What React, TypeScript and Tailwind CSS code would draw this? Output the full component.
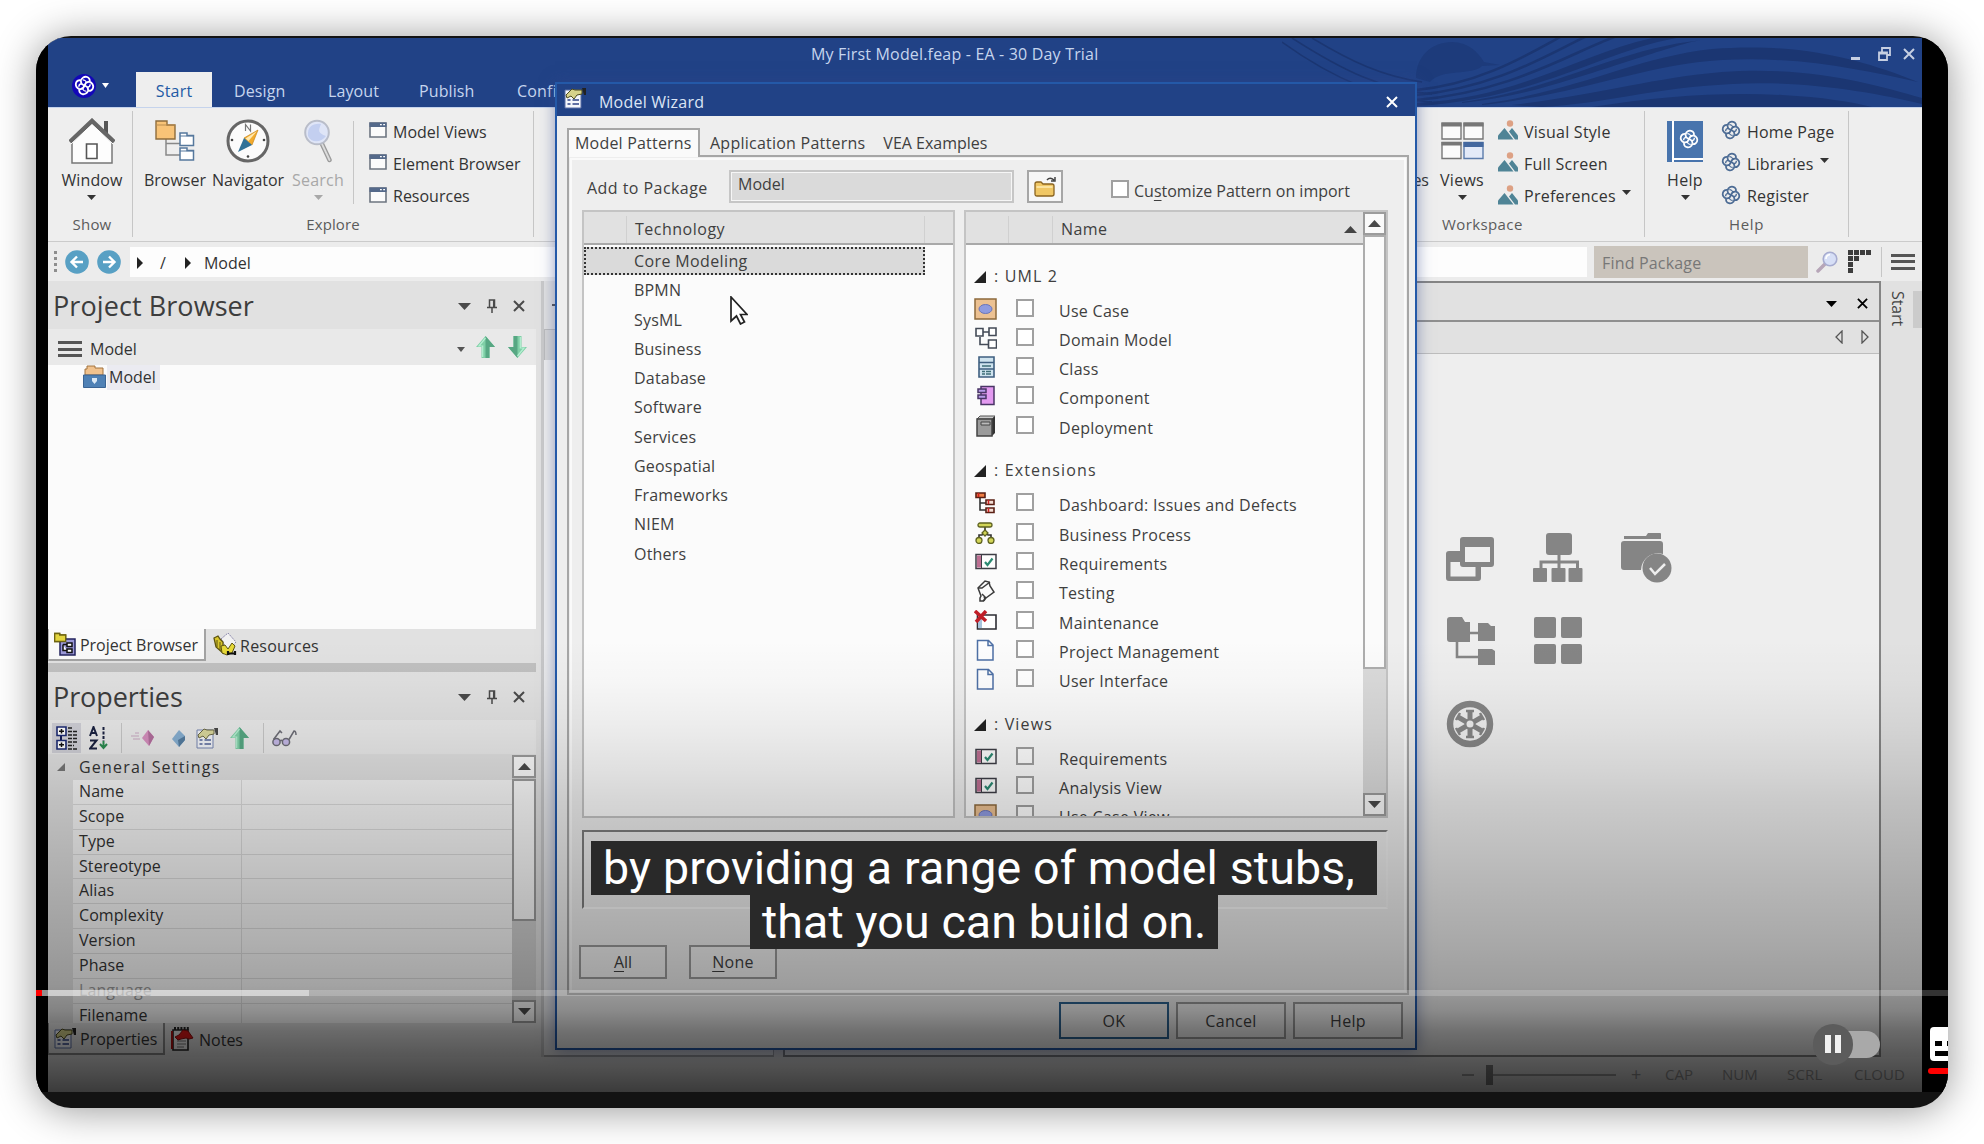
import React from "react";

type IconProps = { className?: string };

/* ---------- small glyphs ---------- */

const Caret = ({ className = "" }: IconProps) => (
  <svg viewBox="0 0 10 6" preserveAspectRatio="none" className={`block h-[5px] w-[9px] shrink-0 ${className}`}>
    <path d="M0 0h10L5 6z" fill="currentColor" />
  </svg>
);

const Cross = ({ className = "" }: IconProps) => (
  <svg viewBox="0 0 12 12" className={`block size-3 shrink-0 ${className}`}>
    <path d="M1 1l10 10M11 1L1 11" stroke="currentColor" strokeWidth="2" fill="none" />
  </svg>
);

const Pin = () => (
  <svg viewBox="0 0 10 14" className="block h-[14px] w-[10px] shrink-0 text-[#4a4a4a]">
    <path d="M2.500 8V1h5v7M6.700 1v7M0 8.600h10M5 9v5" stroke="currentColor" strokeWidth="1.500" fill="none" />
  </svg>
);

const Knot = ({ className = "" }: IconProps) => (
  <svg viewBox="0 0 24 24" className={`block shrink-0 ${className}`} fill="none" stroke="currentColor" strokeWidth="2.100">
    <path d="M8 6.500C8.500 3 12 1.500 14.500 2.200C17.500 3 18.500 5.500 17.800 8" />
    <path d="M17.500 8C21 8.500 22.500 12 21.800 14.500C21 17.500 18.500 18.500 16 17.800" />
    <path d="M16 17.500C15.500 21 12 22.500 9.500 21.800C6.500 21 5.500 18.500 6.200 16" />
    <path d="M6.500 16C3 15.500 1.500 12 2.200 9.500C3 6.500 5.500 5.500 8 6.200" />
    <path d="M8 6.300C7.500 9 9 11 12 12C15 13 16.500 15 16 17.700" />
    <path d="M17.700 8C15 7.500 13 9 12 12C11 15 9 16.500 6.300 16" />
    <path d="M10 5.500C12 5.500 14 7 14 9M18.500 10.500C18.500 12.500 17 14 15 14M14 18.500C12 18.500 10 17 10 15M5.500 13.500C5.500 11.500 7 10 9 10" strokeWidth="1.500" />
  </svg>
);

const Arrow = ({ down = false }: { down?: boolean }) => (
  <svg viewBox="0 0 19 22" className={`block h-[22px] w-[19px] shrink-0 ${down ? "rotate-180" : ""}`}>
    <path d="M9.500 0L19 11h-5.500v11h-8V11H0z" fill="#7fcfa6" />
    <path d="M9.500 0L19 11h-5.500v11h-4z" fill="#57a783" />
    <path d="M9.500 2L3 10h3.700v11" stroke="#b5efd2" strokeWidth="1.200" fill="none" />
  </svg>
);

const Burger = ({ className = "" }: IconProps) => (
  <div className={`flex h-4 w-6 shrink-0 flex-col justify-between ${className}`}>
    <div className="h-[3px] bg-[#555]" />
    <div className="h-[3px] bg-[#555]" />
    <div className="h-[3px] bg-[#555]" />
  </div>
);

const HandSheet = ({ className = "" }: IconProps) => (
  <svg viewBox="0 0 23 22" className={`block h-[22px] w-[23px] shrink-0 ${className}`}>
    <path d="M1 3h16v18H1z" fill="#f4f6fb" stroke="#5b6ea5" />
    <path d="M3.500 13h3M8.500 13H15M3.500 17h3M8.500 17H15" stroke="#2e4386" strokeWidth="1.600" />
    <path d="M2 8l6-6 3 1h7v4l-5 1-3 4-3-3-4 2z" fill="#d6d28a" stroke="#4d4a1e" />
    <path d="M18 1h4v7h-2z" fill="#222" />
  </svg>
);

const Magnifier = ({ className = "", flip = false }: IconProps & { flip?: boolean }) => (
  <svg viewBox="0 0 28 44" className={`block shrink-0 ${flip ? "-scale-x-100" : ""} ${className}`}>
    <path d="M18 25l7.500 16" stroke="#9b9b9b" strokeWidth="4.500" strokeLinecap="round" />
    <path d="M18 25l7.500 16" stroke="#dcdcdc" strokeWidth="1.800" strokeLinecap="round" />
    <circle cx="13" cy="13.500" r="11.800" fill="#dfe5f7" stroke="#b9bdc9" strokeWidth="2" />
    <path d="M4 17C3 7 10 4 17 5C14 12 14 14 22 17C17 24 7 24 4 17z" fill="#c3cff0" />
  </svg>
);

const SearchGlass = () => (
  <svg viewBox="0 0 22 22" className="ml-[8px] block size-[22px] shrink-0">
    <path d="M9.500 12.500L2 20" stroke="#b7a6b8" strokeWidth="3.500" strokeLinecap="round" />
    <circle cx="14" cy="8" r="6.800" fill="#d7dff6" stroke="#a7acd0" strokeWidth="1.600" />
    <path d="M10 8q0-4 4-4.500" stroke="#fff" strokeWidth="1.600" fill="none" />
  </svg>
);

/* ---------- ribbon ---------- */

const WindowIcon = () => (
  <svg viewBox="0 0 18 16" className="block h-4 w-[18px] shrink-0">
    <path d="M1 1h16v14H1z" fill="#fbfbfb" stroke="#6d7580" strokeWidth="1.600" />
    <path d="M.5.500h17v4.500H.5z" fill="#54698a" />
    <path d="M11 2.600h1.800M14.200 2.600H16" stroke="#fff" strokeWidth="1.200" />
  </svg>
);

const PictureIcon = () => (
  <svg viewBox="0 0 20 20" className="block size-5 shrink-0">
    <circle cx="12" cy="3.500" r="3.200" fill="#dda184" />
    <path d="M0 19.500v-4L6.500 8l9 11.500z" fill="#4f8496" />
    <path d="M11 11.500l3-3.500 6 7.500v4h-3z" fill="#4f8496" />
  </svg>
);

const RibbonItem = ({ icon, label, caret }: { icon: React.ReactNode; label: string; caret?: boolean }) => (
  <div className="flex h-[32.250px] items-center gap-[6px]">
    {icon}
    <span className="mt-[3px]">{label}</span>
    {caret && <Caret className="mb-1 text-[#333]" />}
  </div>
);

const BigButton = ({ icon, label, caret, className = "" }: { icon: React.ReactNode; label: string; caret?: boolean; className?: string }) => (
  <div className={`flex flex-col items-center ${className}`}>
    <div className="flex h-[60px] items-center">{icon}</div>
    <span className="-mt-px leading-5">{label}</span>
    {caret && <Caret className="mt-[5px]" />}
  </div>
);

const HouseIcon = () => (
  <svg viewBox="0 0 46 46" className="block size-[46px]">
    <path d="M37 3v14" stroke="#555" strokeWidth="4" />
    <path d="M3 45V23L23 5l20 18v22z" fill="#fdfdfd" stroke="#777" strokeWidth="1.500" />
    <path d="M1 24L23 3l22 21" fill="none" stroke="#666" strokeWidth="4.500" />
    <path d="M2 26L23 6.500 44 26" fill="none" stroke="#fff" strokeWidth="1" />
    <path d="M17.500 26h10.500v14.500H17.500z" fill="#fff" stroke="#555" strokeWidth="1.600" />
  </svg>
);

const BrowserIcon = () => (
  <svg viewBox="0 0 40 42" className="block h-[42px] w-10">
    <path d="M11 19v16h14M11 23.500h14" stroke="#888" strokeWidth="1.500" fill="none" />
    <path d="M1 19V1h11v4h8v14z" fill="#f8c377" stroke="#8d6c3c" strokeWidth="1.400" />
    <path d="M1 5h19" stroke="#b98d50" />
    <path d="M25 25.500V13h7v2.500h6.500v10zM25 40V28h7v2.500h6.500V40z" fill="#fff" stroke="#56789d" strokeWidth="1.500" />
    <path d="M25 16h13M25 31h13" stroke="#56789d" />
  </svg>
);

const CompassIcon = () => (
  <svg viewBox="0 0 44 44" className="block size-11">
    <circle cx="22" cy="22" r="20" fill="#fbfbfb" stroke="#666" strokeWidth="3" />
    <path d="M19.500 12V5.500l5 6.500V5.500" stroke="#777" strokeWidth="1.200" fill="none" />
    <circle cx="6" cy="21" r="1.300" fill="#444" /><circle cx="38" cy="21" r="1.300" fill="#444" /><circle cx="22" cy="37.500" r="1.300" fill="#444" />
    <path d="M32 11L18 19l8 7z" fill="#f3ab2d" stroke="#c9861b" strokeWidth=".7" />
    <path d="M31 12L19.500 19.500l3 2.500z" fill="#ffe9b0" />
    <path d="M12 33l6-14 8 7z" fill="#2f7197" />
  </svg>
);

const ViewsIcon = () => (
  <svg viewBox="0 0 43 38" className="block h-[38px] w-[43px]">
    <g fill="#fbfbfb" stroke="#777" strokeWidth="1.400">
      <path d="M1 1h19v16H1zM23 1h19v16H23zM1 20.500h19v16H1z" />
      <path d="M23 20.500h19v16H23z" fill="#e3eaf8" stroke="#5c7cab" />
    </g>
    <path d="M.5 1h20v3.500H.5zM22.500 1h20v3.500h-20zM.5 20h20v3.500H.5z" fill="#777" />
    <path d="M22.500 20h20v5h-20z" fill="#44689f" />
  </svg>
);

const BookIcon = () => (
  <div className="flex h-[41px] w-9 bg-[#4874ad]">
    <div className="w-[7px] border-r-2 border-white" />
    <div className="flex flex-1 flex-col items-center justify-between pt-2">
      <Knot className="size-[20px] text-white" />
      <div className="mb-[2px] h-[2px] w-full bg-white" />
    </div>
  </div>
);

const TitleWaves = () => (
  <svg viewBox="0 0 640 69" className="absolute right-0 top-0 h-[69px] w-[640px]" fill="none" stroke="#1b3672">
    <path d="M0 4C50 40 100 62 150 64" strokeWidth="1.500" />
    <path d="M10 0C60 32 100 52 150 56" strokeWidth="1.500" />
    <path d="M30 0C70 24 100 38 140 44" strokeWidth="1.500" />
    <path d="M134 40C134 18 150 4 170 4C186 4 196 14 202 24L218 27L200 28C190 38 160 30 148 44z" fill="#1d3b7b" stroke="none" />
    <path d="M134 52C200 46 250 14 280 -2M134 57C215 50 270 14 305 -2M134 62C230 54 290 14 335 -2" strokeWidth="2.500" />
    <g fill="#1b3672" stroke="none">
      <path d="M134 65C240 60 300 14 375 -1L400 -1C320 12 260 60 134 68z" />
      <path d="M180 64C280 50 330 12 420 2C400 4 330 30 270 47C240 56 210 62 180 65z" />
      <path d="M200 66C300 52 350 20 430 11C520 4 580 22 636 44C580 32 520 18 440 22C360 27 300 56 200 67z" />
      <path d="M230 67C320 56 370 40 440 34C530 28 590 46 640 60L640 66C590 54 520 42 450 46C370 50 320 66 260 69z" />
      <path d="M310 69C380 58 440 54 500 57C540 59 570 64 590 69z" />
    </g>
  </svg>
);

const TitleBar = () => (
  <header className="relative flex h-[69px] shrink-0 flex-col justify-between bg-[#214286] text-[#c6d5ee]">
    <TitleWaves />
    <div className="relative flex h-[30px] pl-[763px] text-[16px] tracking-[0.180px]">
      <span className="w-[900px] leading-[33px]">My First Model.feap - EA - 30 Day Trial</span>
      <div className="ml-[140px] flex h-8 items-center text-[#c6cfe2]">
        <div className="mt-2 h-[3px] w-[9px] bg-current" />
        <svg viewBox="0 0 13 14" className="ml-[18px] h-[14px] w-[13px]" fill="none" stroke="currentColor" strokeWidth="1.800">
          <path d="M4 4.500V1h8v7H9M1 5.500h8V13H1zM1 6.500h8" />
        </svg>
        <Cross className="ml-[12px]" />
      </div>
    </div>
    <nav className="relative flex h-[35px] text-[16px]">
      <div className="flex w-[88px] items-center pb-2 pl-6">
        <span className="grid size-6 place-items-center rounded-full bg-[#1307b8]"><Knot className="size-[21px] text-white" /></span>
        <Caret className="ml-[6px] !h-[5px] !w-[7px] text-white" />
      </div>
      <span className="w-[76px] bg-[#eeeeee] text-center leading-[39px] tracking-[0.200px] text-[#1f5aa5]">Start</span>
      <span className="ml-[22px] w-[94px] leading-[39px] tracking-[0.100px]">Design</span>
      <span className="w-[91px] leading-[39px] tracking-[0.100px]">Layout</span>
      <span className="w-[98px] leading-[39px] tracking-[0.100px]">Publish</span>
      <span className="leading-[39px] tracking-[0.200px]">Configure</span>
    </nav>
  </header>
);

const VLine = ({ className = "" }: IconProps) => <div className={`w-px shrink-0 bg-[#c6c6c6] ${className}`} />;

const Ribbon = () => (
  <section className="flex h-[135px] shrink-0 border-b border-t border-b-[#cbcbcb] border-t-[#c5d3ec] bg-[#eeeeee] pb-1 pt-[3px] text-[16px] leading-5 text-[#333]">
    <div className="flex w-[84px] flex-col items-center pl-1">
      <BigButton icon={<HouseIcon />} label="Window" caret className="h-[103px] tracking-[0.100px]" />
      <span className="text-[15px] tracking-[0.200px] text-[#5b5b5b]">Show</span>
    </div>
    <VLine />
    <div className="flex w-[400px] flex-col">
      <div className="flex h-[103px]">
        <BigButton icon={<BrowserIcon />} label="Browser" className="ml-2.5 w-[64px]" />
        <BigButton icon={<CompassIcon />} label="Navigator" className="ml-px w-[80px] tracking-[-0.050px]" />
        <BigButton icon={<Magnifier className="h-11 w-7" />} label="Search" caret className="w-[60px] tracking-[0.200px] text-[#a8a8a8]" />
        <VLine className="ml-[5px] mt-2.5 h-[83px]" />
        <div className="ml-[15px] mt-[3px]">
          <RibbonItem icon={<WindowIcon />} label="Model Views" />
          <RibbonItem icon={<WindowIcon />} label="Element Browser" />
          <RibbonItem icon={<WindowIcon />} label="Resources" />
        </div>
      </div>
      <span className="text-center text-[15px] tracking-[0.100px] text-[#5b5b5b]">Explore</span>
    </div>
    <VLine />
    <div className="flex w-[1110px] flex-col">
      <div className="flex h-[103px] justify-end">
        <BigButton icon={null} label="Perspectives" />
        <BigButton icon={<ViewsIcon />} label="Views" caret className="ml-[9px] w-[48px] tracking-[0.300px]" />
        <div className="ml-[12px] mt-[3px] w-[146px] tracking-[0.250px]">
          <RibbonItem icon={<PictureIcon />} label="Visual Style" />
          <RibbonItem icon={<PictureIcon />} label="Full Screen" />
          <RibbonItem icon={<PictureIcon />} label="Preferences" caret />
        </div>
      </div>
      <span className="ml-[908px] text-[15px] tracking-[0.400px] text-[#5b5b5b]">Workspace</span>
    </div>
    <VLine />
    <div className="flex w-[203px] flex-col">
      <div className="flex h-[103px]">
        <BigButton icon={<BookIcon />} label="Help" caret className="ml-[17px] w-[46px] tracking-[0.300px]" />
        <div className="ml-[13px] mt-[3px] tracking-[0.200px]">
          <RibbonItem icon={<Knot className="size-5 text-[#4c6b94]" />} label="Home Page" />
          <RibbonItem icon={<Knot className="size-5 text-[#4c6b94]" />} label="Libraries" caret />
          <RibbonItem icon={<Knot className="size-5 text-[#4c6b94]" />} label="Register" />
        </div>
      </div>
      <span className="text-center text-[15px] tracking-[0.700px] text-[#5b5b5b]">Help</span>
    </div>
    <VLine />
  </section>
);

const RoundArrow = ({ flip = false }: { flip?: boolean }) => (
  <svg viewBox="0 0 24 24" className={`block size-6 shrink-0 ${flip ? "-scale-x-100" : ""}`}>
    <circle cx="12" cy="12" r="11.800" fill="#58a0c4" />
    <path d="M18 12H7M12 6.500L6.500 12l5.500 5.500" stroke="#fff" strokeWidth="2.400" fill="none" />
  </svg>
);

const Play = ({ className = "" }: IconProps) => (
  <svg viewBox="0 0 6 12" className={`block h-3 w-[6px] shrink-0 ${className}`}><path d="M0 0l6 6-6 6z" fill="#222" /></svg>
);

const AddressBar = () => (
  <div className="flex h-[39px] shrink-0 items-center bg-[#ececec] text-[16px] text-[#333]">
    <div className="ml-[6px] flex h-[21px] w-[3px] flex-col justify-between">
      {[0, 1, 2, 3].map((i) => <div key={i} className="size-[3px] bg-[#8e8e8e]" />)}
    </div>
    <div className="ml-[8px] flex gap-2"><RoundArrow /><RoundArrow flip /></div>
    <div className="ml-[9px] flex h-[30px] w-[1457px] items-center bg-[#fdfdfd]">
      <Play className="ml-[7px] mt-0.5" />
      <span className="ml-[17px] mt-0.5">/</span>
      <Play className="ml-[19px] mt-0.5" />
      <span className="ml-[13px] mt-0.5">Model</span>
    </div>
    <div className="ml-[7px] flex h-8 w-[214px] items-center bg-[#cac4bc] pl-[8px] pt-0.5 tracking-[0.180px] text-[#777]"><span>Find Package</span></div>
    <SearchGlass />
    <svg viewBox="0 0 23 23" className="ml-[10px] block size-[23px] shrink-0" fill="#3d3d3d">
      <path d="M0 0h5v5H0zM6 0h5v5H6zM12 0h5v5h-5zM18 0h5v5h-5zM0 6h5v5H0zM6 6h5v5H6zM0 12h5v5H0zM0 18h5v5H0z" />
    </svg>
    <VLine className="ml-[10px] h-[30px]" />
    <Burger className="ml-[9px]" />
  </div>
);

/* ---------- left dock ---------- */

const PanelHeader = ({ title, tracking }: { title: string; tracking: string }) => (
  <div className="flex h-12 shrink-0 items-center pl-[5px] pt-0.5 text-[27px] text-[#3d3d3d]">
    <span className={`w-[405px] leading-[44px] ${tracking}`}>{title}</span>
    <Caret className="!h-[7px] !w-[13px] text-[#4a4a4a]" />
    <div className="ml-[16px]"><Pin /></div>
    <Cross className="ml-[16px] text-[#4a4a4a]" />
  </div>
);

const CaseIcon = () => (
  <svg viewBox="0 0 23 23" className="block size-[23px] shrink-0">
    <path d="M2 10V4h2V1h8v2h8v7z" fill="#f1c28d" stroke="#a1723e" />
    <path d="M.5 10h22v12.500H.5z" fill="#4f81b5" stroke="#3a6494" />
    <path d="M9 13h5v3l-2.500 3L9 16z" fill="#dce9f5" />
  </svg>
);

const BrowserTabIcon = () => (
  <svg viewBox="0 0 22 24" className="block h-6 w-[22px] shrink-0">
    <path d="M.7 9.500V1.500h5V3h6v6.500z" fill="#e3d53f" stroke="#6e6410" strokeWidth="1.300" />
    <path d="M6 7h15v16H6z" fill="#9b98d8" stroke="#23235e" strokeWidth="1.500" />
    <path d="M.7 9.500V1.500h5V3h6v6.500z" fill="#e3d53f" stroke="#6e6410" strokeWidth="1.300" />
    <path d="M13 11h5v3.500h-5zM13 17h5v3.500h-5zM9 12.500h4M9 12.500v6h4" fill="#fff" stroke="#111" strokeWidth="1.500" />
  </svg>
);

const ResourcesTabIcon = () => (
  <svg viewBox="0 0 24 24" className="block size-6 shrink-0">
    <path d="M8 6l7-6 8 9-8 9z" fill="#f2f2f2" stroke="#8884aa" strokeDasharray="2 1" />
    <path d="M1 5l4-2 2 3 3 3v11L3 14z" fill="#d9c62b" stroke="#5d5410" strokeWidth="1.300" />
    <path d="M4 7v7M7 9v8" stroke="#5d5410" />
    <path d="M8 13l4-1 3 4 4-6 3 3-3 7-5 2-5-2z" fill="#e7d938" stroke="#5d5410" />
    <path d="M15 18v4M22 18v4M15 20.500h7" stroke="#111" strokeWidth="2.200" />
  </svg>
);

const NotesTabIcon = () => (
  <svg viewBox="0 0 23 24" className="block h-6 w-[23px] shrink-0">
    <path d="M2 3h15v20H2z" fill="#f1f1f1" stroke="#222" strokeWidth="1.600" />
    <path d="M1 4v18" stroke="#a11" strokeWidth="2" />
    <path d="M3 1.500h15" stroke="#222" strokeWidth="3" strokeDasharray="2 1.200" />
    <path d="M6 14h9M6 17h9M6 20h7" stroke="#777" />
    <path d="M4 10l4-2 4-5 5 1 5 7-4 1-3-1-5 1-3 1z" fill="#e01818" stroke="#8b0d0d" />
  </svg>
);

const ScrollButton = ({ down = false }: { down?: boolean }) => (
  <div className="grid h-[23px] w-full shrink-0 place-items-center border-2 border-[#9c9c9c] bg-[#fafafa]">
    <Caret className={`!h-[7px] !w-[13px] text-[#4a4a4a] ${down ? "" : "rotate-180"}`} />
  </div>
);

const ProjectBrowser = () => (
  <div className="flex flex-col text-[16px] text-[#333]">
    <PanelHeader title="Project Browser" tracking="tracking-[0.080px]" />
    <div className="flex h-9 w-[488px] items-center bg-[#e9e9e9]">
      <Burger className="ml-[10px] mt-1" />
      <span className="ml-[8px] mt-1 w-[367px]">Model</span>
      <Caret className="mt-1 !h-[5px] !w-[8px] text-[#555]" />
      <div className="ml-[11px] flex gap-[13px]"><Arrow /><Arrow down /></div>
    </div>
    <div className="flex h-[264px] w-[488px] items-start bg-[#fbfbfb] pl-[35px]">
      <CaseIcon />
      <span className="ml-px bg-[#ebebf1] px-[2px] pr-1 leading-[25px]">Model</span>
    </div>
    <div className="flex h-[34px] items-start">
      <div className="flex h-8 w-[158px] items-center border-b-2 border-l border-r-2 border-[#a3a3a3] border-l-[#bbb] bg-[#fafafa] pl-[5px]">
        <BrowserTabIcon />
        <span className="ml-[4px] mt-px whitespace-nowrap tracking-[-0.030px]">Project Browser</span>
      </div>
      <div className="ml-[7px] flex h-8 items-center">
        <ResourcesTabIcon />
        <span className="ml-[3px] mt-px tracking-[0.250px]">Resources</span>
      </div>
    </div>
  </div>
);

const ROWS = ["Name", "Scope", "Type", "Stereotype", "Alias", "Complexity", "Version", "Phase", "Language", "Filename"];

const PropertiesPanel = () => (
  <div className="flex flex-col text-[16px] text-[#333]">
    <PanelHeader title="Properties" tracking="tracking-[-0.100px]" />
    <div className="flex h-[34px] w-[488px] items-center bg-[#e9e9e9] pt-0.5">
      <div className="ml-1 grid h-[30px] w-[29px] place-items-center bg-[#cfcfd6]">
        <svg viewBox="0 0 22 24" className="h-6 w-[22px]">
          <path d="M5 9v6" stroke="#111a55" strokeWidth="2" />
          <path d="M1 1h9v8.500H1zM1 14.500h9V23H1z" fill="#fff" stroke="#1c2b74" strokeWidth="1.600" />
          <path d="M3 5.300h5M5.500 3v4.600M3 18.700h5M5.500 16.500V21" stroke="#111" strokeWidth="1.500" />
          <path d="M12 2h5M12 5.500h9M12 9h9M12 12.500h9M12 16h9M12 19.500h6M12 23h9" stroke="#222" strokeWidth="1.700" strokeDasharray="4 1" />
        </svg>
      </div>
      <svg viewBox="0 0 20 24" className="ml-[8px] h-6 w-5" fill="none" stroke="#1a2140" strokeWidth="2">
        <path d="M1 10L4.500 1 8 10M2.500 7h4M1 14.500h6.500L1 22.500h7" />
        <path d="M14.500 1v14" strokeDasharray="3 1.500" />
        <path d="M14.500 15v7M11 18l3.500 4 3.500-4" stroke="#2b8a50" />
      </svg>
      <VLine className="ml-[12px] h-[30px]" />
      <svg viewBox="0 0 24 20" className="ml-[9px] h-5 w-6">
        <path d="M0 8h8M2 11h7M4 5h4" stroke="#c9a9c2" />
        <path d="M11 10l6-8 6 7-5 9z" fill="#d58fbd" /><path d="M17 2l6 7-5 9z" fill="#b26f9d" />
      </svg>
      <svg viewBox="0 0 14 20" className="ml-[17px] h-5 w-[14px]">
        <path d="M0 11l7-9 6 6v4l-6 7z" fill="#86aed0" /><path d="M6 12l7-4v4l-6 7z" fill="#557c9f" />
      </svg>
      <HandSheet className="ml-[10px] opacity-80" />
      <div className="ml-[11px]"><Arrow /></div>
      <VLine className="ml-[14px] h-[30px]" />
      <svg viewBox="0 0 25 18" className="ml-[8px] h-[18px] w-[25px]" fill="none" stroke="#6c6c75" strokeWidth="1.500">
        <circle cx="4.500" cy="13" r="3.600" fill="#c4b8e6" /><circle cx="14" cy="13" r="3.600" fill="#c4b8e6" />
        <path d="M8 12q1.200-1.500 2.500 0M1.500 10.500L8 2l2 2M17 10.500L22 2q2 0 2 4" />
      </svg>
    </div>
    <div className="flex h-[269px] w-[488px] overflow-hidden">
      <div className="flex w-[464px] flex-col">
        <div className="flex h-[26px] shrink-0 items-center">
          <svg viewBox="0 0 8 8" className="ml-[9px] size-2"><path d="M8 0v8H0z" fill="#777" /></svg>
          <span className="ml-[14px] tracking-[1.200px]">General Settings</span>
        </div>
        <div className="ml-[25px] flex flex-col">
          {ROWS.map((r) => (
            <div key={r} className="flex h-[24.870px] shrink-0 border-b border-[#dcdcdc] bg-[#f7f7f7] leading-[23px]">
              <span className={`w-[169px] border-r border-[#dcdcdc] pl-[6px] tracking-[0.080px] ${r === "Language" ? "text-[#9a9a9a]" : ""}`}>{r}</span>
            </div>
          ))}
        </div>
      </div>
      <div className="mt-[1px] flex w-6 flex-col bg-[#cfcfcf]">
        <ScrollButton />
        <div className="mt-px h-[142px] border-2 border-[#9c9c9c] bg-[#fafafa]" />
        <div className="flex-1" />
        <ScrollButton down />
      </div>
    </div>
    <div className="flex h-[34px] items-start">
      <div className="flex h-8 w-[117px] items-center border-b-2 border-l border-r-2 border-[#8a8a8a] bg-[#e6e6e6] pl-[5px]">
        <HandSheet />
        <span className="ml-[3px] mt-px">Properties</span>
      </div>
      <div className="ml-[6px] flex h-8 items-center">
        <NotesTabIcon />
        <span className="ml-[5px] mt-px">Notes</span>
      </div>
    </div>
  </div>
);

/* ---------- document area ---------- */

const GalleryIcons = () => (
  <svg viewBox="0 -2 230 222" className="ml-[659px] mt-[178px] block h-[222px] w-[230px]" fill="#858585">
    <path fillRule="evenodd" d="M16 6q0-3 3-3h28q3 0 3 3v24q0 3-3 3H37v11q0 3-3 3H5q-3 0-3-3V20q0-3 3-3h11zM21 13v15h25V13zM6.500 28v14.500H31.500V33H19q-3 0-3-3v-2z" />
    <rect x="102" y="-1" width="26" height="22" rx="3" />
    <path d="M113.500 20h3v18h-3z" /><path d="M97 36v-8h36.500v8" fill="none" stroke="#858585" strokeWidth="3" />
    <rect x="89" y="34" width="14" height="14" rx="1" /><rect x="107.500" y="34" width="14" height="14" rx="1" /><rect x="124.500" y="34" width="14" height="14" rx="1" />
    <path d="M180 5V2h22l2-3h12q1 0 1 1v5zM177 10q0-3 3-3h36q3 0 3 3v10a17 17 0 0 0-22 16H180q-3 0-3-3z" />
    <circle cx="213" cy="34" r="14.500" /><path d="M206 34l5 6 10-10" fill="none" stroke="#eee" strokeWidth="2.500" />
    <path d="M3 86q0-3 3-3h12l3 5h5v20H6q-3 0-3-3zM34 89h10l3 3h4v15H34zM34 115h14l3 2v14H34z" />
    <path d="M25 99h10M13 107v16h22" fill="none" stroke="#858585" strokeWidth="2.600" />
    <rect x="90" y="83" width="22" height="21" rx="2" /><rect x="117" y="83" width="21" height="21" rx="2" /><rect x="90" y="110" width="22" height="20" rx="2" /><rect x="117" y="110" width="21" height="20" rx="2" />
    <circle cx="26" cy="190" r="20" fill="none" stroke="#858585" strokeWidth="6.500" />
    <g stroke="#858585" strokeWidth="5" fill="none"><path d="M26 176v28M14 183l24 14M38 183l-24 14" /><path d="M22 177h8M22 203h8M12 186l4-7M36 201l4-7M36 179l4 7M12 194l4 7" strokeWidth="2.500" /></g>
    <circle cx="26" cy="190" r="5.500" /><circle cx="26" cy="190" r="3.500" fill="#eee" />
  </svg>
);

/* Narrow dock between the project tree and the open document */
const MiddleDock = () => (
  <div className="mr-[9px] flex w-[230px] shrink-0 flex-col border-b-2 border-r border-[#a8a8a8] bg-[#eeeeee]">
    <div className="flex h-12 items-center bg-[#e1e1e1]">
      <div className="ml-[8px] h-[2px] w-3 bg-[#555]" />
    </div>
    <div className="h-[31px] border-l border-t border-[#bcbcbc] bg-[#d6d6d6]" />
  </div>
);

const DocumentArea = () => (
  <div className="flex h-[776px] w-[1098px] shrink-0 flex-col border-2 border-[#858585] bg-[#eeeeee]">
    <div className="flex h-[39px] shrink-0 items-center justify-end border-b-2 border-[#8f8f8f] bg-[#e1e1e1] pr-[11px] pt-1 text-black">
      <Caret className="!h-[6px] !w-[11px]" />
      <Cross className="ml-[20px] !size-[11px]" />
    </div>
    <div className="flex h-8 shrink-0 items-center justify-end border-b border-[#bdbdbd] bg-[#e1e1e1] pb-px pr-[10px]">
      <svg viewBox="0 0 34 14" className="h-[14px] w-[34px]" fill="none" stroke="#555" strokeWidth="1.300">
        <path d="M7 1v12L1 7zM27 1v12l6-6z" />
      </svg>
    </div>
    <GalleryIcons />
  </div>
);

const StatusBar = () => (
  <footer className="flex h-[35px] items-center bg-[#e4e4e4] text-[15px] text-[#979797]">
    <div className="ml-[1414px] h-[2px] w-3 bg-[#a0a0a0]" />
    <div className="ml-[12px] h-5 w-[7px] bg-[#7f7f7f]" />
    <div className="h-[2px] w-[123px] bg-[#a0a0a0]" />
    <span className="ml-[15px] w-[34px] text-[18px]">+</span>
    <span className="w-[57px]">CAP</span>
    <span className="w-[65px]">NUM</span>
    <span className="w-[67px] tracking-[0.200px]">SCRL</span>
    <span>CLOUD</span>
  </footer>
);

/* ---------- wizard dialog ---------- */

const ic = "block h-[22px] w-[23px] shrink-0";
const UseCaseIcon = () => (
  <svg viewBox="0 0 23 22" className={ic}><path d="M1 1h21v20H1z" fill="#ecc192" stroke="#8d6a3c" strokeWidth="1.500" /><ellipse cx="11.500" cy="11" rx="6.500" ry="4.500" fill="#8f9be0" stroke="#6b76b8" /></svg>
);
const DomainIcon = () => (
  <svg viewBox="0 0 23 22" className={ic} fill="#fff" stroke="#444b57" strokeWidth="1.600"><path d="M9 5h6M6 10v7.500h9" fill="none" /><path d="M2 1.500h7v7.500H2zM15 1h7v7.500h-7zM14.500 13h8v8h-8z" /></svg>
);
const ClassIcon = () => (
  <svg viewBox="0 0 23 22" className={ic}><path d="M5 1h15v20H5z" fill="#cfe3ee" stroke="#3f5f80" strokeWidth="1.600" /><path d="M5 6.500h15M5 13h15" stroke="#3f5f80" strokeWidth="1.500" /><path d="M8 10h9M8 15.500h3M12 15.500h5M8 18h3M12 18h5" stroke="#3f6f78" strokeWidth="1.600" /></svg>
);
const ComponentIcon = () => (
  <svg viewBox="0 0 23 22" className={ic} stroke="#4a3566" strokeWidth="1.500"><path d="M7 1.500h13v18H7z" fill="#e39af0" /><path d="M4 4h8v3.500H4zM4 10h8v3.500H4z" fill="#b79be8" /></svg>
);
const DeploymentIcon = () => (
  <svg viewBox="0 0 23 22" className={ic}><path d="M18 4l3-3v17l-3 3z" fill="#333" /><path d="M3 4l3-3h15l-3 3z" fill="#ccc" stroke="#555" /><path d="M3 4h15v17H3z" fill="#9b9b9b" stroke="#444" strokeWidth="1.500" /><path d="M7 7h9v3H7z" fill="#bbb" stroke="#444" /></svg>
);
const DashboardIcon = () => (
  <svg viewBox="0 0 23 22" className={ic} stroke="#5a2014" strokeWidth="1.600"><path d="M6 5v13h6M6 11h6" fill="none" stroke="#333" /><path d="M2 1h9v4.500H2z" fill="#ef7d43" /><path d="M12 8h8v4.500h-8zM12 16h8v4.500h-8z" fill="#f3ded5" /><path d="M14.500 8v4M14.500 16v4M4.500 1v4" stroke="#c22" /></svg>
);
const ProcessIcon = () => (
  <svg viewBox="0 0 23 22" className={ic} stroke="#5f6322" strokeWidth="1.300"><path d="M11 5v6M5 17v-4h3l3-3 3 3h3v4" fill="none" stroke="#333" strokeWidth="1.600" /><rect x="4" y="1" width="14" height="4" rx="2" fill="#d2d557" /><path d="M11 8l3 3-3 3-3-3z" fill="#d2d557" /><circle cx="5" cy="18.500" r="3" fill="#d2d557" /><circle cx="17" cy="18.500" r="3" fill="#d2d557" /></svg>
);
const RequirementIcon = () => (
  <svg viewBox="0 0 23 22" className={ic}><path d="M2 3.500h20v14H2z" fill="#fdfdfd" stroke="#3d3d45" strokeWidth="1.500" /><path d="M3 4.500h4v12H3z" fill="#bd6f92" /><path d="M7.500 4v13" stroke="#3d3d45" /><path d="M11 11l2.500 3 5-6.500" fill="none" stroke="#2c8a72" strokeWidth="2.200" /></svg>
);
const TestingIcon = () => (
  <svg viewBox="0 0 23 22" className={ic} fill="none" stroke="#3b3b3b" strokeWidth="1.500"><path d="M4 8l7-7 4 1 1 4 4 6-8 6-3 3H6l0-3 1-2z" fill="#fbfbfb" /><path d="M4 8h4l8-6M12 18l-4-4M9 21q3-1 1-4" /></svg>
);
const MaintenanceIcon = () => (
  <svg viewBox="0 0 23 22" className={ic}><path d="M3.500 5H22v14H3.500z" fill="#fff" stroke="#2e2e35" strokeWidth="1.600" /><path d="M4 8h4v10H4z" fill="#a9c3dc" /><path d="M1 1l11 10M12 1L2 12" stroke="#c01e28" strokeWidth="3.500" /></svg>
);
const PageIcon = () => (
  <svg viewBox="0 0 23 22" className={ic} fill="#fdfdfe" stroke="#4d6fa5" strokeWidth="1.500"><path d="M3.500 1.500h11l4.500 4.500v15H3.500zM14 1.500v5h5" /></svg>
);

const TECH = ["Core Modeling", "BPMN", "SysML", "Business", "Database", "Software", "Services", "Geospatial", "Frameworks", "NIEM", "Others"];

const GROUPS: { title: string; items: [string, React.FC][] }[] = [
  { title: "UML 2", items: [["Use Case", UseCaseIcon], ["Domain Model", DomainIcon], ["Class", ClassIcon], ["Component", ComponentIcon], ["Deployment", DeploymentIcon]] },
  { title: "Extensions", items: [["Dashboard: Issues and Defects", DashboardIcon], ["Business Process", ProcessIcon], ["Requirements", RequirementIcon], ["Testing", TestingIcon], ["Maintenance", MaintenanceIcon], ["Project Management", PageIcon], ["User Interface", PageIcon]] },
  { title: "Views", items: [["Requirements", RequirementIcon], ["Analysis View", RequirementIcon], ["Use Case View", UseCaseIcon]] },
];

const Checkbox = ({ className = "" }: IconProps) => <div className={`size-[18px] shrink-0 border-2 border-[#a0a0a0] bg-white ${className}`} />;

const TechnologyList = () => (
  <div className="flex h-[608px] w-[373px] flex-col border-2 border-[#c4c4c4] bg-[#fbfbfb]">
    <div className="flex h-[33px] shrink-0 items-stretch border-b-2 border-[#a9a9a9] bg-[#e1e1e1] pt-1">
      <VLine className="ml-[42px] !bg-[#d0d0d0]" />
      <span className="w-[297px] pl-2 leading-[26px] tracking-[0.500px]">Technology</span>
      <VLine className="!bg-[#d0d0d0]" />
    </div>
    <ul className="pt-[2px]">
      {TECH.map((t, i) => (
        <li
          key={t}
          className={
            i === 0
              ? "mb-px h-[28.270px] w-[341px] border-2 border-dotted border-[#333] bg-[#dadada] pl-[48px] leading-[25px] tracking-[0.380px]"
              : "h-[29.270px] pl-[50px] leading-[29px] tracking-[0.200px]"
          }
        >
          {t}
        </li>
      ))}
    </ul>
  </div>
);

const PatternList = () => (
  <div className="flex h-[608px] w-[424px] border-2 border-[#c4c4c4] bg-[#fbfbfb]">
    <div className="flex h-[604px] w-[397px] flex-col overflow-hidden">
      <div className="flex h-[33px] shrink-0 items-center border-b-2 border-[#a9a9a9] bg-[#e1e1e1] pt-1">
        <VLine className="ml-[42px] h-full !bg-[#d0d0d0]" />
        <VLine className="ml-[43px] h-full !bg-[#d0d0d0]" />
        <span className="-mt-0.5 w-[291px] pl-2 tracking-[0.400px]">Name</span>
        <Caret className="!h-[7px] !w-[13px] rotate-180 text-[#444]" />
      </div>
      {GROUPS.map((g, gi) => (
        <div key={g.title} className={gi === 0 ? "shrink-0 pt-[12px]" : "shrink-0 pt-[9.500px]"}>
          <div className="flex h-[37px] items-center pl-[8px]">
            <svg viewBox="0 0 12 12" className="mt-0.5 size-3"><path d="M12 0v12H0z" fill="#222" /></svg>
            <span className="ml-[8px] tracking-[1.150px]">: {g.title}</span>
          </div>
          {g.items.map(([name, Icon], i) => (
            <div key={name} className={`flex h-[29.270px] items-center pl-[8px] ${i === 0 ? "mt-[2px]" : ""}`}>
              <div className="-mt-1"><Icon /></div>
              <Checkbox className="mb-1.5 ml-[19px]" />
              <span className="ml-[25px] whitespace-nowrap tracking-[0.280px]">{name}</span>
            </div>
          ))}
        </div>
      ))}
    </div>
    <div className="flex w-[23px] flex-col bg-[#dadada]">
      <ScrollButton />
      <div className="h-[434px] border-2 border-[#adadad] bg-[#fbfbfb]" />
      <div className="flex-1" />
      <ScrollButton down />
    </div>
  </div>
);

const btn = "flex items-center justify-center border-2 border-[#9a9a9a] bg-[#f2f2f2]";

const FolderIcon = () => (
  <svg viewBox="0 0 22 22" className="block size-[22px]">
    <path d="M1 8q0-2 2-2h4l2 2h9q2 0 2 2v8q0 2-2 2H3q-2 0-2-2z" fill="#f0c765" stroke="#8a6420" strokeWidth="1.300" />
    <path d="M2.500 11h16" stroke="#fbe39f" strokeWidth="2" />
    <path d="M13 4q3-3.500 7 0M21 1v4h-4" stroke="#444" strokeWidth="1.500" fill="none" />
  </svg>
);

const Wizard = () => (
  <section className="absolute left-[507px] top-[44px] flex h-[968px] w-[862px] flex-col border-2 border-[#2459a8] bg-[#eeeeee] text-[16px] text-[#3f3f3f] shadow-[0_0_14px_rgba(50,70,140,0.500)]">
    <div className="flex h-[32px] shrink-0 items-center bg-[#214286] pl-[7px] pr-[17px] pt-1 text-[#dbe5f5]">
      <HandSheet className="mb-2" />
      <span className="ml-[12px] flex-1 tracking-[0.220px]">Model Wizard</span>
      <Cross className="text-white" />
    </div>
    <div className="ml-[10px] mt-[12px] flex h-[27px] shrink-0">
      <div className="relative -mb-[2px] h-[29px] w-[133px] border-2 border-b-0 border-[#a6a6a6] bg-[#fafafa] pl-[6px] leading-[27px] tracking-[0.200px]">Model Patterns</div>
      <span className="ml-[10px] leading-[31px] tracking-[0.240px]">Application Patterns</span>
      <span className="ml-[18px] leading-[31px]">VEA Examples</span>
    </div>
    <div className="ml-[10px] flex h-[840px] w-[842px] shrink-0 flex-col border-2 border-[#a6a6a6] bg-[#eeeeee] pl-[13px] outline-2 outline-offset-[-5px] outline-[#fafafa]">
      <div className="flex h-[53px] shrink-0 items-start pt-[13px]">
        <span className="ml-[5px] mt-[6px] w-[142px] tracking-[0.450px]">Add to Package</span>
        <div className="h-[33px] w-[285px] border-2 border-[#c6c6c6] bg-[#f6f6f6] p-[1px]">
          <div className="h-full bg-[#dadada] pl-[6px] leading-[23px]">Model</div>
        </div>
        <div className="ml-[13px] grid h-[33px] w-[36px] place-items-center border-2 border-[#a6a6a6] bg-[#f7f7f7]"><FolderIcon /></div>
        <Checkbox className="ml-[48px] mt-[10px]" />
        <span className="ml-[5px] mt-[9px]">Cu<u className="underline-offset-[3px]">s</u>tomize Pattern on import</span>
      </div>
      <div className="flex gap-[9px]">
        <TechnologyList />
        <PatternList />
      </div>
      <div className="mt-[12px] h-[79px] w-[806px] shrink-0 border-2 border-[#7d7d7d] border-b-[#fbfbfb] border-r-[#f2f2f2]" />
      <div className="mt-[36px] flex gap-[22px]">
        <div className={`${btn} -ml-[3px] h-[34px] w-[88px]`}><u className="underline-offset-[3px]">A</u>ll</div>
        <div className={`${btn} h-[34px] w-[88px] tracking-[0.300px]`}><u className="underline-offset-[3px]">N</u>one</div>
      </div>
    </div>
    <div className="mt-[7px] flex justify-end gap-[7px] pr-[12px] tracking-[0.300px]">
      <div className={`${btn} h-[37px] w-[110px] !border-[#2d6391]`}>OK</div>
      <div className={`${btn} h-[37px] w-[110px]`}>Cancel</div>
      <div className={`${btn} h-[37px] w-[110px]`}>Help</div>
    </div>
  </section>
);

const Pointer = () => (
  <svg viewBox="0 0 18 29" className="absolute left-[682px] top-[258px] h-[29px] w-[18px]">
    <path d="M1 1v24l5.500-5 4 8 4-2-4-7.500H17z" fill="#fff" stroke="#222" strokeWidth="1.700" />
  </svg>
);

/* ---------- player chrome ---------- */

const PlayerOverlay = () => (
  <>
    <div className="pointer-events-none absolute inset-x-0 bottom-4 h-[452px] bg-[linear-gradient(to_bottom,rgba(0,0,0,0)_0%,rgba(0,0,0,0.020)_9%,rgba(0,0,0,0.060)_19%,rgba(0,0,0,0.110)_29%,rgba(0,0,0,0.150)_35.500%,rgba(0,0,0,0.200)_46.500%,rgba(0,0,0,0.250)_57.500%,rgba(0,0,0,0.290)_66.500%,rgba(0,0,0,0.340)_76.500%,rgba(0,0,0,0.420)_82%,rgba(0,0,0,0.530)_86.500%,rgba(0,0,0,0.600)_91%,rgba(0,0,0,0.660)_95%,rgba(0,0,0,0.740)_100%)]" />
    <div className="absolute inset-x-0 top-[954px] flex h-[6px] bg-white/20">
      <div className="w-[6px] bg-[#ff0000]" />
      <div className="w-[267px] bg-white/45" />
    </div>
    <div className="absolute left-[555px] top-[805px] flex w-[786px] flex-col items-center font-['Roboto'] text-[46.500px] leading-[54px] text-white">
      <span className="w-[786px] whitespace-pre bg-[#292929] pl-[12px] tracking-[0.160px]">by providing a range of model stubs, </span>
      <span className="w-[468px] whitespace-pre bg-[#292929] pl-[12px] tracking-[0.130px]">that you can build on.</span>
    </div>
    <div className="absolute left-[1777px] top-[988px] flex h-10 w-[67px] items-center">
      <div className="absolute right-0 top-[7px] h-[27px] w-[46px] rounded-full bg-[#a9a9a9]" />
      <div className="relative flex h-[41px] w-10 items-center justify-center gap-1 rounded-full bg-[#5c5c5c]">
        <div className="h-[18px] w-[6px] bg-[#f1f1f1]" />
        <div className="h-[18px] w-[6px] bg-[#f1f1f1]" />
      </div>
    </div>
    <div className="absolute left-[1892px] top-[991px] flex w-[60px] flex-col">
      <svg viewBox="0 0 50 34" className="ml-[2px] h-[34px] w-[50px]">
        <rect width="50" height="34" rx="4" fill="#fff" />
        <path d="M5 14h7v5H5zM17 14h15v5H17zM5 24h20v5H5z" fill="#000" />
      </svg>
      <div className="mt-[7px] h-[6px] rounded-full bg-[#ff0000]" />
    </div>
  </>
);

export default function App() {
  return (
    <div className="h-[1144px] w-[1984px] overflow-hidden bg-white p-9 font-['Open_Sans',sans-serif]">
      <div className="relative flex h-[1072px] w-[1912px] flex-col overflow-hidden rounded-[35px] bg-[#131313] pt-0.5 shadow-[0_2px_40px_rgba(0,0,0,0.420)]">
        <div className="flex h-[1054px] bg-black pl-3">
          <main className="relative flex w-[1874px] flex-col overflow-hidden bg-[#e1e1e1]">
            <TitleBar />
            <Ribbon />
            <AddressBar />
            <div className="flex h-[776px] shrink-0">
              <aside className="flex w-[496px] shrink-0 flex-col border-r-[3px] border-[#c9c9c9] bg-[#e1e1e1]">
                <ProjectBrowser />
                <div className="h-[9px] w-[488px] shrink-0 bg-[#c0c0c0]" />
                <PropertiesPanel />
              </aside>
              <MiddleDock />
              <DocumentArea />
              <div className="flex w-[41px] shrink-0 items-start justify-between bg-[#e1e1e1] pt-2.5">
                <span className="ml-[7px] text-[16px] leading-[20px] tracking-[-0.100px] text-[#444] [writing-mode:vertical-rl]">Start</span>
                <div className="h-[37px] w-[9px] bg-[#cbcbcb]" />
              </div>
            </div>
            <StatusBar />
            <Wizard />
            <Pointer />
          </main>
        </div>
        <PlayerOverlay />
      </div>
    </div>
  );
}
